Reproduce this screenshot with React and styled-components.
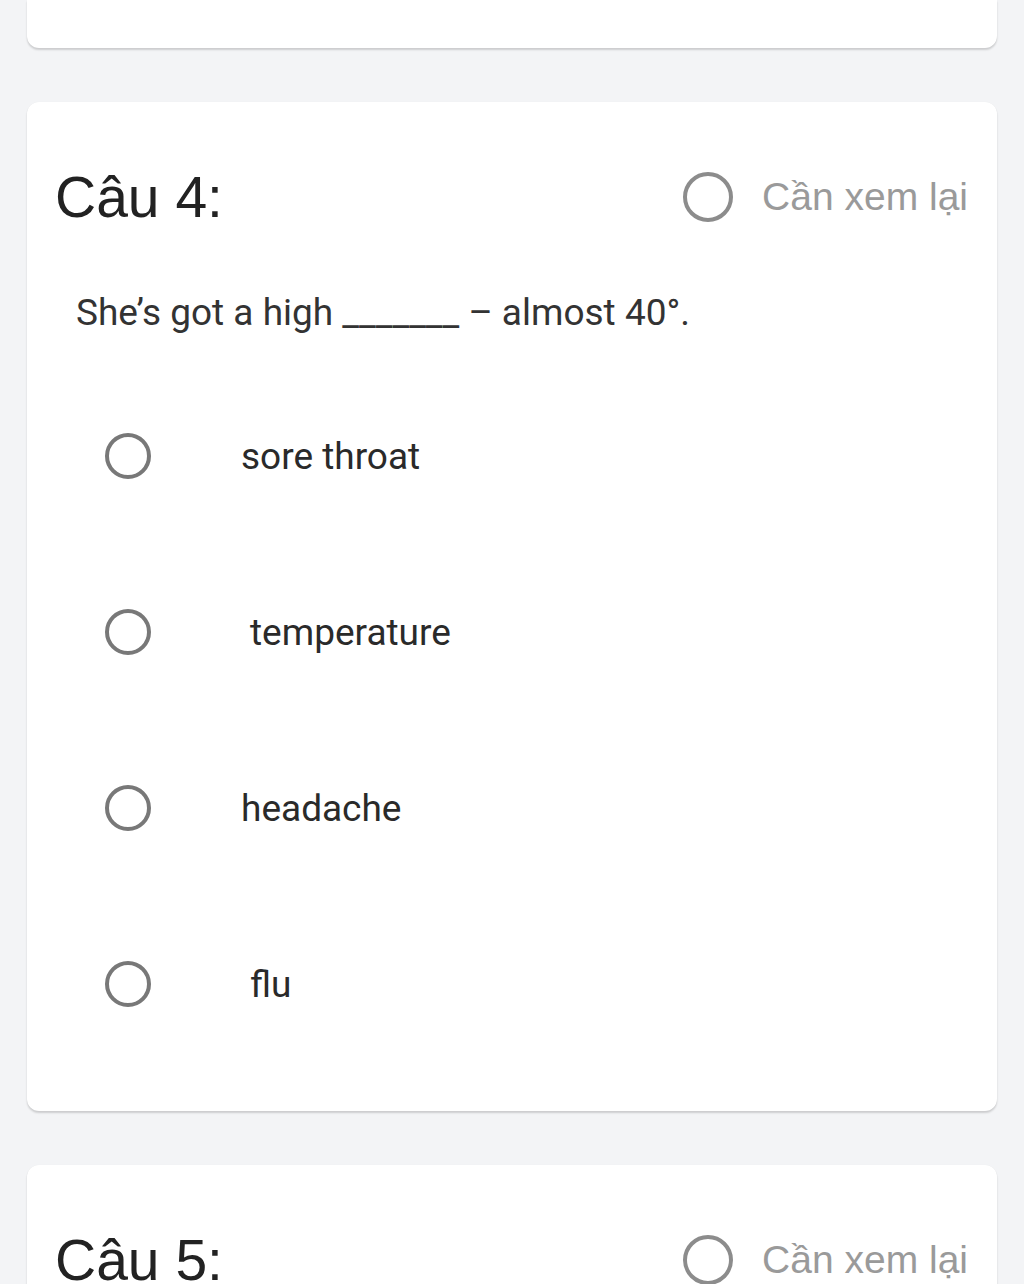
import styled, { createGlobalStyle } from 'styled-components';

const GlobalStyle = createGlobalStyle`
    body {
        margin: 0;
        background: #f3f4f6;
        font-family: Roboto, "Liberation Sans", sans-serif;
    }
`;

const Page = styled.main`
    display: flex;
    flex-direction: column;
    gap: 54px;
    padding: 0 27px;
    height: 1284px;
    overflow: hidden;
`;

const Card = styled.section`
    flex-shrink: 0;
    background: #fff;
    border-radius: ${(p) => (p.$cut ? '0 0 12px 12px' : '12px')};
    box-shadow: 0 2px 2px rgba(0, 0, 0, 0.16), 0 0 1px rgba(0, 0, 0, 0.06);
    padding: ${(p) => (p.$cut ? '0' : '59px 29px 39px 28px')};
    height: ${(p) => (p.$cut ? '48px' : 'auto')};
`;

const Header = styled.div`
    display: flex;
    align-items: center;
    justify-content: space-between;
    height: 72px;
`;

const Title = styled.h3`
    margin: 0;
    font-family: "Liberation Sans", Arial, sans-serif;
    font-weight: 400;
    font-size: 57px;
    color: #222;
`;

const Review = styled.label`
    display: flex;
    align-items: center;
    gap: 29px;
    font-family: "Liberation Sans", Arial, sans-serif;
    font-size: 39px;
    color: #9a9a9a;
`;

const Ring = styled.span`
    display: inline-block;
    box-sizing: border-box;
    width: ${(p) => p.$size}px;
    height: ${(p) => p.$size}px;
    border-radius: 50%;
    border: 4px solid ${(p) => p.$color};
    flex-shrink: 0;
`;

const Question = styled.p`
    margin: 55px 0 0 21px;
    font-size: 37px;
    line-height: 50px;
    color: #333;
`;

const Options = styled.ul`
    list-style: none;
    margin: 30px 0 0 50px;
    padding: 0;
`;

const Option = styled.li`
    display: flex;
    align-items: center;
    height: 176px;
`;

const OptionLabel = styled.span`
    margin-left: ${(p) => 90 + (p.$indent || 0)}px;
    font-size: 37px;
    color: #2a2a2a;
`;

const options = [
    { text: 'sore throat', indent: 0 },
    { text: 'temperature', indent: 9 },
    { text: 'headache', indent: 0 },
    { text: 'flu', indent: 9 },
];

const QuestionHeader = ({ n }) => (
    <Header>
        <Title>Câu {n}:</Title>
        <Review>
            <Ring $size={50} $color="#8c8c8c" />
            Cần xem lại
        </Review>
    </Header>
);

const App = () => (
    <>
        <GlobalStyle />
        <Page>
            <Card $cut />
            <Card>
                <QuestionHeader n={4} />
                <Question>She’s got a high _______ – almost 40°.</Question>
                <Options>
                    {options.map((o) => (
                        <Option key={o.text}>
                            <Ring $size={46} $color="#787878" />
                            <OptionLabel $indent={o.indent}>{o.text}</OptionLabel>
                        </Option>
                    ))}
                </Options>
            </Card>
            <Card>
                <QuestionHeader n={5} />
            </Card>
        </Page>
    </>
);

export default App;
